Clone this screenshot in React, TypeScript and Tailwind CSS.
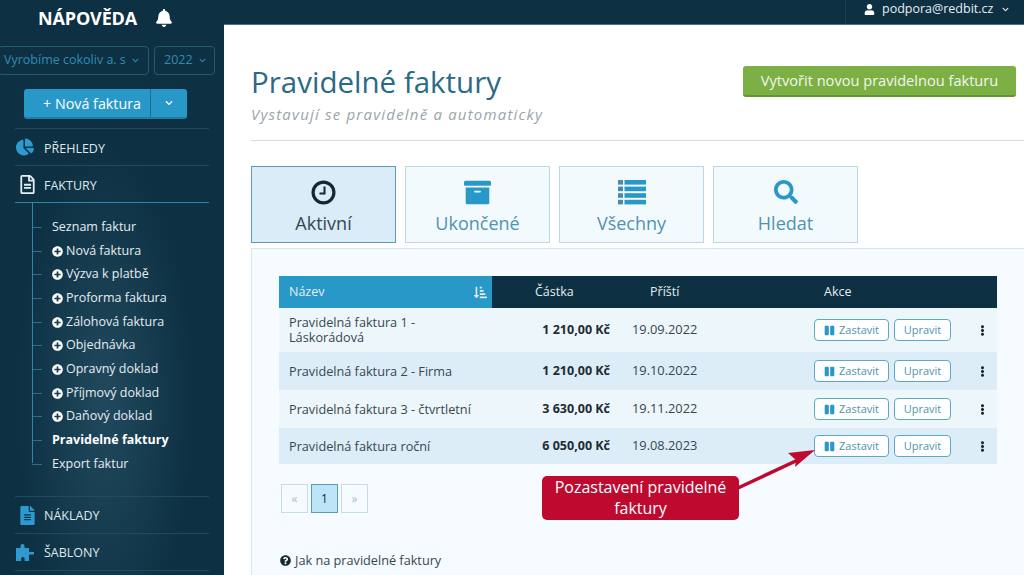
import {
  FaArchive,
  FaBell,
  FaChartPie,
  FaChevronDown,
  FaEllipsisV,
  FaFileAlt,
  FaPause,
  FaPlusCircle,
  FaQuestionCircle,
  FaRegFileAlt,
  FaSearch,
  FaSortAmountDownAlt,
  FaUser,
} from 'react-icons/fa';

const subItems = [
  { label: 'Seznam faktur' },
  { label: 'Nová faktura', plus: true },
  { label: 'Výzva k platbě', plus: true },
  { label: 'Proforma faktura', plus: true },
  { label: 'Zálohová faktura', plus: true },
  { label: 'Objednávka', plus: true },
  { label: 'Opravný doklad', plus: true },
  { label: 'Příjmový doklad', plus: true },
  { label: 'Daňový doklad', plus: true },
  { label: 'Pravidelné faktury', bold: true },
  { label: 'Export faktur' },
];

const rows = [
  { name: 'Pravidelná faktura 1 - Láskorádová', amount: '1 210,00 Kč', next: '19.09.2022', h: 'h-[44px]', bg: 'bg-[#edf6fb]' },
  { name: 'Pravidelná faktura 2 - Firma', amount: '1 210,00 Kč', next: '19.10.2022', h: 'h-[38px]', bg: 'bg-[#dcedf7]' },
  { name: 'Pravidelná faktura 3 - čtvrtletní', amount: '3 630,00 Kč', next: '19.11.2022', h: 'h-[38px]', bg: 'bg-[#edf6fb]' },
  { name: 'Pravidelná faktura roční', amount: '6 050,00 Kč', next: '19.08.2023', h: 'h-[36px]', bg: 'bg-[#dcedf7]' },
];

function ClockIcon() {
  return (
    <svg width="25" height="25" viewBox="0 0 25 25" fill="none" stroke="#16272e">
      <circle cx="12.5" cy="12.5" r="10.4" strokeWidth="3.2" />
      <path d="M13.5 6.5v7H8.5" strokeWidth="2" />
    </svg>
  );
}

function ListIcon() {
  return (
    <svg width="28" height="25" viewBox="0 0 28 25" fill="#2898c8">
      {[0, 6.6, 13.2, 19.8].map((y) => (
        <g key={y}>
          <rect x="0" y={y} width="5" height="4.6" fill="#4a8ba8" />
          <rect x="6.5" y={y} width="21.5" height="4.6" />
        </g>
      ))}
    </svg>
  );
}

function PuzzleIcon() {
  return (
    <svg width="18" height="18" viewBox="0 0 18 18" fill="#2d9bd0">
      <path d="M0 5h4.5V3a2 2 0 0 1 4 0v2H13v4h1.2a1.4 1.4 0 0 1 0 0H18v2.5h-5V18H8.6v-2.4a1.7 1.7 0 0 0-3.4 0V18H0z" />
    </svg>
  );
}

function NavRow({
  icon,
  label,
  border = 'border-[#234a5c]',
  labelPad = 'pt-[2px]',
}: {
  icon: React.ReactNode;
  label: string;
  border?: string;
  labelPad?: string;
}) {
  return (
    <div className={`mx-[15px] h-[37px] flex items-center border-b ${border}`}>
      <div className="w-[29px] flex justify-start pl-px">{icon}</div>
      <span className={`text-[12.5px] text-[#dfe8ec] ${labelPad}`}>{label}</span>
    </div>
  );
}

function Tab({ icon, label, active }: { icon: React.ReactNode; label: string; active?: boolean }) {
  return (
    <div
      className={`w-[145px] h-[77px] border flex flex-col items-center pt-[12px] ${
        active ? 'bg-[#d9ecf8] border-[#5b9bb5] text-[#37474f]' : 'bg-[#f3fafd] border-[#bcd9e3] text-[#4f93b0]'
      }`}
    >
      <div className="h-[26px] flex items-center">{icon}</div>
      <span className="text-[18px] leading-[24px] mt-[6px]">{label}</span>
    </div>
  );
}

export default function App() {
  return (
    <div className="w-[1024px] h-[575px] overflow-hidden flex bg-white font-['Open_Sans',sans-serif]">
      {/* Sidebar */}
      <aside className="w-[224px] h-full shrink-0 bg-[#0d3042] bg-[radial-gradient(ellipse_90px_260px_at_105px_400px,#21495e,#0d3042)]">
        <div className="h-[36px] flex items-center gap-[18px] pl-[38px]">
          <span className="text-[18px] font-bold text-white tracking-[-0.15px]">NÁPOVĚDA</span>
          <FaBell className="text-white text-[18px]" />
        </div>
        <div className="mt-[10px] flex gap-[5px] -ml-[2px] text-[#2f8cb5] text-[12.5px]">
          <div className="w-[151px] h-[29px] border border-[#235a73] rounded-[4px] flex items-center pl-[5px] pr-[9px]">
            <span className="overflow-hidden whitespace-nowrap w-[124px]">Vyrobíme cokoliv a. s</span>
            <FaChevronDown className="ml-auto text-[7px]" />
          </div>
          <div className="w-[61px] h-[29px] border border-[#235a73] rounded-[4px] flex items-center pl-[9px] pr-[8px]">
            <span>2022</span>
            <FaChevronDown className="ml-auto text-[7px]" />
          </div>
        </div>
        <div className="mt-[14px] ml-[24px] w-[163px] h-[30px] flex rounded-[3px] bg-[#2898c8] border-b-2 border-[#1f7fa8] text-white">
          <div className="w-[127px] flex items-center justify-end pr-[9px] pt-[1px] text-[14.3px] border-r border-[#1a6d92]">+ Nová faktura</div>
          <div className="flex-1 flex items-center justify-center">
            <FaChevronDown className="text-[8px]" />
          </div>
        </div>
        <div className="mx-[15px] mt-[9px] border-b border-[#234a5c]" />
        <NavRow icon={<FaChartPie className="text-[#2d9bd0] text-[18px]" />} label="PŘEHLEDY" labelPad="pt-[4px]" />
        <NavRow icon={<FaRegFileAlt className="text-[#e4eef2] text-[19px] ml-[2px]" />} label="FAKTURY" labelPad="pt-[4px]" border="border-[#2d86ad]" />
        <ul className="relative ml-[32px] pt-[11px] h-[293px]">
          <div className="absolute left-0 top-0 h-[260px] w-px bg-[#2d86ad]" />
          {subItems.map((item) => (
            <li key={item.label} className="h-[23.7px] pt-[3px] flex items-center text-[12.5px] text-[#e6edf0]">
              <span className="w-[10px] h-px bg-[#2d6e8c] mr-[10px]" />
              {item.plus && <FaPlusCircle className="text-white text-[11px] mr-[3px]" />}
              <span className={item.bold ? 'font-bold text-white' : ''}>{item.label}</span>
            </li>
          ))}
        </ul>
        <div className="mx-[15px] border-b border-[#234a5c]" />
        <NavRow icon={<FaFileAlt className="text-[#2d9bd0] text-[19px] ml-[2px]" />} label="NÁKLADY" />
        <NavRow icon={<PuzzleIcon />} label="ŠABLONY" />
      </aside>

      {/* Main */}
      <div className="flex-1 min-w-0 flex flex-col">
        <header className="h-[25px] shrink-0 bg-[#0d3042] border-b border-[#4a7283] flex justify-end">
          <div className="w-[179px] border-l border-[#1c4052] flex items-center pl-[18px] pb-[5px] text-[12.5px] text-[#e6edf0]">
            <FaUser className="text-[11px] mr-[7px] text-white" />
            <span>podpora@redbit.cz</span>
            <FaChevronDown className="text-[7px] ml-[9px]" />
          </div>
        </header>

        <main className="flex-1 relative pl-[27px]">
          <div className="flex justify-between items-start pr-[8px] h-[116px] border-b border-[#cfdde3]">
            <div className="pt-[37px]">
              <h1 className="text-[29.5px] leading-[40px] text-[#2b6a86]">Pravidelné faktury</h1>
              <p className="mt-[2px] text-[15px] leading-[20px] italic text-[#9aa5aa] tracking-[1.2px]">Vystavují se pravidelně a automaticky</p>
            </div>
            <div className="mt-[41px] w-[273px] h-[31px] rounded-[3px] bg-[#7cb045] border-b-2 border-[#659435] text-[#f2f7ea] text-[14.6px] flex items-center justify-center">
              Vytvořit novou pravidelnou fakturu
            </div>
          </div>

          <div className="flex gap-[9px] mt-[25px]">
            <Tab active label="Aktivní" icon={<ClockIcon />} />
            <Tab label="Ukončené" icon={<FaArchive className="text-[#2898c8] text-[27px]" />} />
            <Tab label="Všechny" icon={<ListIcon />} />
            <Tab label="Hledat" icon={<FaSearch className="text-[#2898c8] text-[24px]" />} />
          </div>

          <section className="mt-[5px] h-[340px] bg-[#f5fbfe] border-l border-t border-[#d5e6ed] pt-[27px] pl-[27px] pr-[27px]">
            <div className="w-[718px] h-[32px] bg-[#0d3042] flex items-center text-[12.5px] text-[#e6edf0]">
              <div className="w-[213px] h-full bg-[#2898c8] flex items-center justify-between pl-[10px] pr-[5px]">
                <span>Název</span>
                <FaSortAmountDownAlt className="text-[13px]" />
              </div>
              <span className="ml-[43px] w-[115px]">Částka</span>
              <span className="w-[174px]">Příští</span>
              <span>Akce</span>
            </div>
            {rows.map((row) => (
              <div key={row.next} className={`w-[718px] ${row.h} ${row.bg} flex items-center text-[12.7px] text-[#37474f]`}>
                <div className="w-[213px] pl-[10px] pr-[15px] leading-[15px]">{row.name}</div>
                <div className="w-[118px] text-right text-[12.5px] font-bold text-[#1d2b32]">{row.amount}</div>
                <div className="ml-[22px] w-[182px] text-[12.8px]">{row.next}</div>
                <div className="w-[75px] h-[22px] rounded-[4px] border border-[#5ba9c6] bg-white flex items-center justify-center gap-[4px] text-[11px] text-[#4f93b0]">
                  <FaPause className="text-[#2898c8] text-[11px]" />
                  <span>Zastavit</span>
                </div>
                <div className="ml-[5px] w-[57px] h-[22px] rounded-[4px] border border-[#5ba9c6] bg-white flex items-center justify-center text-[11px] text-[#4f93b0]">
                  Upravit
                </div>
                <FaEllipsisV className="ml-[26px] text-[11px] text-[#16272e]" />
              </div>
            ))}
            <div className="mt-[20px] ml-[2px] flex gap-[3px] text-[12px]">
              <div className="w-[27px] h-[29px] border border-[#c4dde6] bg-[#f5fbfe] flex items-center justify-center text-[#a9c0c9]">«</div>
              <div className="w-[27px] h-[29px] border border-[#5b9bb5] bg-[#bde5fa] flex items-center justify-center text-[#16272e]">1</div>
              <div className="w-[27px] h-[29px] border border-[#c4dde6] bg-[#f5fbfe] flex items-center justify-center text-[#a9c0c9]">»</div>
            </div>
            <div className="mt-[38px] ml-px flex items-center gap-[4px] text-[12.7px] text-[#37474f]">
              <FaQuestionCircle className="text-[11px] text-[#16272e]" />
              <span>Jak na pravidelné faktury</span>
            </div>
          </section>

          {/* Callout over the table */}
          <div className="absolute left-[318px] top-[451px] w-[197px] h-[44px] rounded-[5px] bg-[#bf0a30] text-white text-[16px] leading-[21px] text-center pt-[1px]">
            Pozastavení pravidelné
            <br />
            faktury
          </div>
          <svg className="absolute left-[510px] top-[420px]" width="90" height="50" viewBox="0 0 90 50">
            <line x1="4" y1="43" x2="66" y2="14" stroke="#bf0a30" strokeWidth="3.5" />
            <polygon points="81,5 54,8 62,15 61,22" fill="#bf0a30" />
          </svg>
        </main>
      </div>
    </div>
  );
}
